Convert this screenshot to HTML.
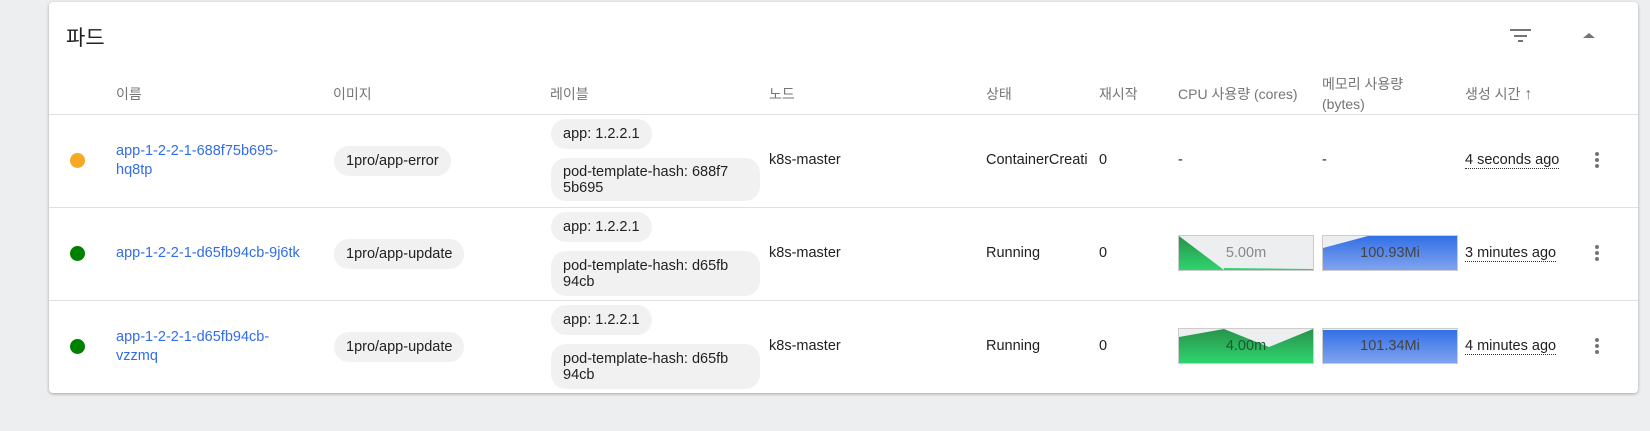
<!DOCTYPE html>
<html><head><meta charset="utf-8"><style>
*{margin:0;padding:0;box-sizing:border-box}
body{width:1650px;height:431px;background:#edeef0;font-family:"Liberation Sans","Noto Sans CJK KR",sans-serif;font-size:14.5px;color:#212121;position:relative;overflow:hidden}
.card{position:absolute;left:49px;top:2px;width:1589px;height:391px;background:#fff;border-radius:4px;box-shadow:0 1px 3px rgba(0,0,0,.3)}
.a{position:absolute;white-space:nowrap}
.h{color:#757575;font-size:14px}
.line{position:absolute;left:49px;width:1589px;height:1px;background:#e0e0e0}
.dot{position:absolute;width:15px;height:15px;border-radius:50%}
.link{color:#326de6;line-height:19px}
.chip{position:absolute;background:#f1f1f1;border-radius:15px;padding:0 12px;line-height:16px;display:flex;align-items:center}
.chart{position:absolute;width:136px;height:36px;border:1px solid #ccc;background:#eceeef}
.chart svg{position:absolute;left:0;top:0}
.chart span{position:absolute;left:0;right:0;top:0;bottom:0;text-align:center;line-height:34px;color:#666;font-size:14.5px}
.time{border-bottom:1px dotted #333;line-height:16px}
.more{position:absolute;width:4px}
.more i{display:block;width:4px;height:4px;border-radius:50%;background:#757575;margin-bottom:2px}
</style></head><body>
<div class="card"></div>
<div class="a" style="left:66px;top:22px;font-size:21px;color:#212121">파드</div>
<div class="a" style="left:1510px;top:29px;width:21px;height:2px;background:#757575"></div>
<div class="a" style="left:1514px;top:35px;width:13px;height:2px;background:#757575"></div>
<div class="a" style="left:1518px;top:40px;width:5px;height:2px;background:#757575"></div>
<div class="a" style="left:1583px;top:33px;width:0;height:0;border-left:6px solid transparent;border-right:6px solid transparent;border-bottom:5px solid #757575"></div>

<div class="a h" style="left:116px;top:84px">이름</div>
<div class="a h" style="left:333px;top:84px">이미지</div>
<div class="a h" style="left:550px;top:84px">레이블</div>
<div class="a h" style="left:769px;top:84px">노드</div>
<div class="a h" style="left:986px;top:84px">상태</div>
<div class="a h" style="left:1099px;top:84px">재시작</div>
<div class="a h" style="left:1178px;top:84px">CPU 사용량 (cores)</div>
<div class="a h" style="left:1322px;top:74px;line-height:20px">메모리 사용량<br>(bytes)</div>
<div class="a h" style="left:1465px;top:84px">생성 시간 <b style="font-weight:normal;font-size:16px">↑</b></div>

<div class="line" style="top:114px"></div>
<div class="line" style="top:207px"></div>
<div class="line" style="top:300px"></div>

<!-- row1 -->
<div class="dot" style="left:70px;top:153px;background:#f9a825"></div>
<div class="a link" style="left:116px;top:142px">app-1-2-2-1-688f75b695-<br>hq8tp</div>
<div class="chip" style="left:334px;top:146px;height:30px">1pro/app-error</div>
<div class="chip" style="left:551px;top:119px;height:30px">app: 1.2.2.1</div>
<div class="chip" style="left:551px;top:158px;height:43px;width:209px">pod-template-hash: 688f7<br>5b695</div>
<div class="a" style="left:769px;top:152px">k8s-master</div>
<div class="a" style="left:986px;top:152px">ContainerCreati</div>
<div class="a" style="left:1099px;top:152px">0</div>
<div class="a" style="left:1178px;top:152px">-</div>
<div class="a" style="left:1322px;top:152px">-</div>
<div class="a time" style="left:1465px;top:152px">4 seconds ago</div>
<div class="more" style="left:1595px;top:152px"><i></i><i></i><i></i></div>

<!-- row2 -->
<div class="dot" style="left:70px;top:246px;background:#008000"></div>
<div class="a link" style="left:116px;top:244px">app-1-2-2-1-d65fb94cb-9j6tk</div>
<div class="chip" style="left:334px;top:239px;height:30px">1pro/app-update</div>
<div class="chip" style="left:551px;top:212px;height:30px">app: 1.2.2.1</div>
<div class="chip" style="left:551px;top:251px;height:45px;width:209px">pod-template-hash: d65fb<br>94cb</div>
<div class="a" style="left:769px;top:245px">k8s-master</div>
<div class="a" style="left:986px;top:245px">Running</div>
<div class="a" style="left:1099px;top:245px">0</div>
<div class="chart" style="left:1178px;top:235px"><svg width="134" height="34"><defs><linearGradient id="g" x1="0" y1="0" x2="0" y2="1"><stop offset="0" stop-color="#27934a"/><stop offset="1" stop-color="#2fd46e"/></linearGradient><linearGradient id="b" x1="0" y1="0" x2="0" y2="1"><stop offset="0" stop-color="#3370e6"/><stop offset="1" stop-color="#80a3ee"/></linearGradient></defs><polygon points="0,0 45,34 0,34" fill="url(#g)"/><polygon points="45,34 45,32 134,33 134,34" fill="#2fd46e"/></svg><span style="color:#888">5.00m</span></div>
<div class="chart" style="left:1322px;top:235px"><svg width="134" height="34"><polygon points="0,12 45,0 134,0 134,34 0,34" fill="url(#b)"/></svg><span style="color:#444">100.93Mi</span></div>
<div class="a time" style="left:1465px;top:245px">3 minutes ago</div>
<div class="more" style="left:1595px;top:245px"><i></i><i></i><i></i></div>

<!-- row3 -->
<div class="dot" style="left:70px;top:339px;background:#008000"></div>
<div class="a link" style="left:116px;top:328px">app-1-2-2-1-d65fb94cb-<br>vzzmq</div>
<div class="chip" style="left:334px;top:332px;height:30px">1pro/app-update</div>
<div class="chip" style="left:551px;top:305px;height:30px">app: 1.2.2.1</div>
<div class="chip" style="left:551px;top:344px;height:45px;width:209px">pod-template-hash: d65fb<br>94cb</div>
<div class="a" style="left:769px;top:338px">k8s-master</div>
<div class="a" style="left:986px;top:338px">Running</div>
<div class="a" style="left:1099px;top:338px">0</div>
<div class="chart" style="left:1178px;top:328px"><svg width="134" height="34"><polygon points="0,8 45,0 90,18 134,0 134,34 0,34" fill="url(#g)"/></svg><span style="color:#1a5a2e">4.00m</span></div>
<div class="chart" style="left:1322px;top:328px"><svg width="134" height="34"><polygon points="0,1 134,1 134,34 0,34" fill="url(#b)"/></svg><span style="color:#444">101.34Mi</span></div>
<div class="a time" style="left:1465px;top:338px">4 minutes ago</div>
<div class="more" style="left:1595px;top:338px"><i></i><i></i><i></i></div>
</body></html>
